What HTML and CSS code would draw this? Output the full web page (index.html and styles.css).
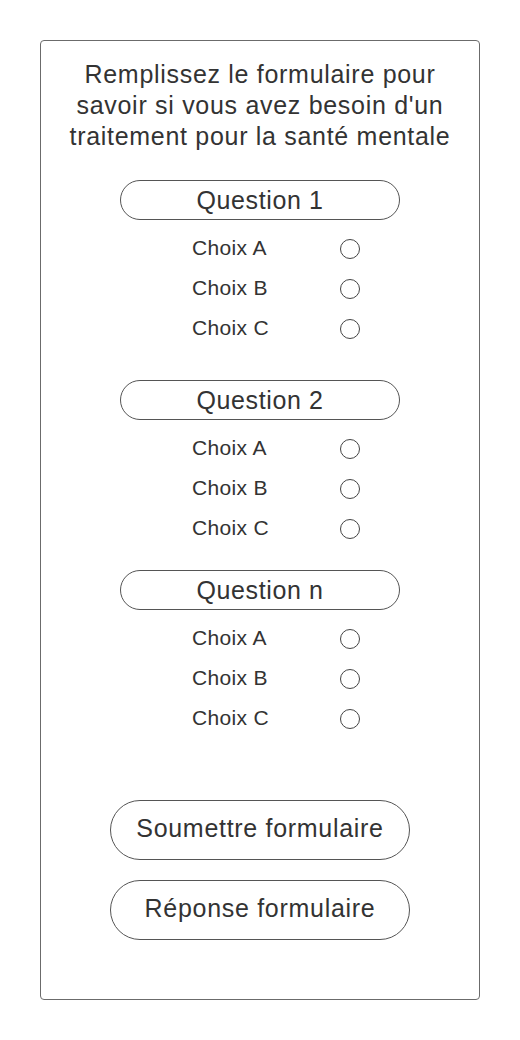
FILE: index.html
```html
<!DOCTYPE html>
<html lang="fr">
<head>
<meta charset="utf-8">
<title>Formulaire santé mentale</title>
<link rel="stylesheet" href="styles.css">
</head>
<body>
<main class="panel">
  <h1 class="title">Remplissez le formulaire pour<br>savoir si vous avez besoin d'un<br>traitement pour la santé mentale</h1>

  <section class="question">
    <div class="pill">Question 1</div>
    <ul class="choices">
      <li class="choice"><span>Choix A</span><span class="radio"></span></li>
      <li class="choice"><span>Choix B</span><span class="radio"></span></li>
      <li class="choice"><span>Choix C</span><span class="radio"></span></li>
    </ul>
  </section>

  <section class="question">
    <div class="pill">Question 2</div>
    <ul class="choices">
      <li class="choice"><span>Choix A</span><span class="radio"></span></li>
      <li class="choice"><span>Choix B</span><span class="radio"></span></li>
      <li class="choice"><span>Choix C</span><span class="radio"></span></li>
    </ul>
  </section>

  <section class="question question-last">
    <div class="pill">Question n</div>
    <ul class="choices">
      <li class="choice"><span>Choix A</span><span class="radio"></span></li>
      <li class="choice"><span>Choix B</span><span class="radio"></span></li>
      <li class="choice"><span>Choix C</span><span class="radio"></span></li>
    </ul>
  </section>

  <div class="actions">
    <button class="btn">Soumettre formulaire</button>
    <button class="btn">Réponse formulaire</button>
  </div>
</main>
</body>
</html>
```

FILE: styles.css
```css
* { box-sizing: border-box; }

html, body {
  margin: 0;
  padding: 0;
  background: #ffffff;
}

body {
  font-family: "Liberation Sans", Arial, sans-serif;
  color: #333333;
}

.panel {
  margin: 40px;
  width: 440px;
  height: 960px;
  border: 1px solid #6b6b6b;
  border-radius: 4px;
  padding-top: 18px;
  display: flex;
  flex-direction: column;
  align-items: center;
}

.title {
  margin: 0;
  font-size: 25px;
  font-weight: normal;
  line-height: 31px;
  text-align: center;
  letter-spacing: 0.7px;
  height: 94px;
}

.question {
  width: 280px;
  margin-top: 27px;
  display: flex;
  flex-direction: column;
}

.question + .question {
  margin-top: 32px;
}

.question + .question-last {
  margin-top: 22px;
}

.pill {
  height: 40px;
  border: 1px solid #555555;
  border-radius: 20px;
  display: flex;
  align-items: center;
  justify-content: center;
  font-size: 25px;
  letter-spacing: 0.6px;
}

.choices {
  list-style: none;
  margin: 8px 0 0;
  padding: 0 0 0 72px;
}

.choice {
  height: 40px;
  display: grid;
  grid-template-columns: 148px 20px;
  align-items: center;
  font-size: 21px;
  letter-spacing: 0.35px;
}

.radio {
  width: 20px;
  height: 20px;
  border: 1px solid #444444;
  border-radius: 50%;
  margin-top: 2px;
}

.actions {
  margin-top: 62px;
  display: flex;
  flex-direction: column;
  gap: 20px;
}

.btn {
  width: 300px;
  height: 60px;
  border: 1px solid #555555;
  border-radius: 30px;
  background: #ffffff;
  font-family: "Liberation Sans", Arial, sans-serif;
  font-size: 25px;
  letter-spacing: 0.7px;
  color: #333333;
  padding: 0 0 3px;
}
```
